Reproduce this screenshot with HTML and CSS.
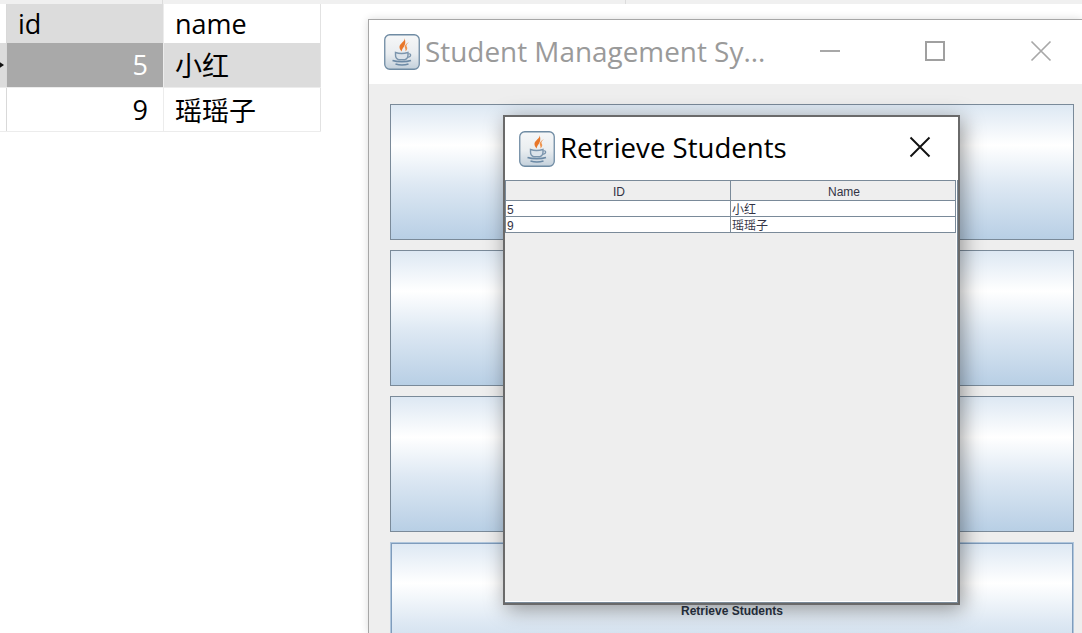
FILE: index.html
```html
<!DOCTYPE html>
<html lang="zh">
<head>
<meta charset="utf-8">
<title>Student Management System</title>
<link rel="stylesheet" href="styles.css">
</head>
<body>
<svg class="defs" width="0" height="0" aria-hidden="true">
  <defs>
    <linearGradient id="tile" x1="0" y1="0" x2="0" y2="1">
      <stop offset="0" stop-color="#f6f7f8"/>
      <stop offset="0.55" stop-color="#e9edf0"/>
      <stop offset="1" stop-color="#c3d0db"/>
    </linearGradient>
    <symbol id="java" viewBox="0 0 36 36">
      <rect x="0.75" y="0.75" width="34.5" height="34.5" rx="5" fill="url(#tile)" stroke="#6f8ba3" stroke-width="1.3"/>
      <path d="M20.500 4c1 3.500-5.500 5.500-5 9.500.2 1.700 1.300 3 2.300 4-.5-3.500 5.700-5.500 2.700-13.500z" fill="#e8772a"/>
      <path d="M25 8c-3.500 1.800-5 4-4 6.300.6 1.200.7 2.200.2 3.200 2.600-1.600 2.300-3.800 1.400-5-.7-1.300.6-3 2.400-4.500z" fill="#ef9550"/>
      <path d="M11.500 18.500c3 1 9 1 12.500 0v2.500c0 2.500-1.800 4.300-3.500 4.800h-5.500c-2-.6-3.500-2.300-3.500-4.800z" fill="#dbe3ea" stroke="#7b95ad" stroke-width="1.400"/>
      <path d="M24.300 20c2.800-1 3.800 2.300-.8 3.500" fill="none" stroke="#7b95ad" stroke-width="1.200"/>
      <path d="M8.500 26.500c4.500 1.600 14 1.600 18.500 0" fill="none" stroke="#6b89a5" stroke-width="1.500"/>
      <path d="M11.500 30c3.500 1 9.500 1 13 0" fill="none" stroke="#6b89a5" stroke-width="1.500"/>
    </symbol>
  </defs>
</svg>

<div class="topstrip"><span class="tick tick-a"></span><span class="tick tick-b"></span></div>

<table class="grid">
  <tr class="grid-head">
    <td class="marker"></td>
    <td class="idcol selected-head">id</td>
    <td class="namecol">name</td>
  </tr>
  <tr class="grid-row current">
    <td class="marker marker-on"><svg class="caret" width="6" height="8" viewBox="0 0 6 8"><path d="M0 0.500l5 3.500-5 3.500z" fill="#111"/></svg></td>
    <td class="idcol num cell-dark">5</td>
    <td class="namecol">小红</td>
  </tr>
  <tr class="grid-row">
    <td class="marker"></td>
    <td class="idcol num">9</td>
    <td class="namecol">瑶瑶子</td>
  </tr>
</table>

<section class="window main-window">
  <header class="titlebar main-title">
    <svg class="java"><use href="#java"/></svg>
    <span class="title-text faded">Student Management Sy...</span>
    <div class="controls">
      <svg class="ctl" width="22" height="22" viewBox="0 0 22 22"><path d="M2 11h20" stroke="#a8a8a8" stroke-width="2"/></svg>
      <svg class="ctl" width="22" height="22" viewBox="0 0 22 22"><rect x="2" y="2" width="18" height="18" fill="none" stroke="#a0a0a0" stroke-width="2"/></svg>
      <svg class="ctl" width="22" height="22" viewBox="0 0 22 22"><path d="M1.500 1.500l19 19M20.500 1.500l-19 19" stroke="#a8a8a8" stroke-width="1.700"/></svg>
    </div>
  </header>
  <div class="main-body">
    <button class="metal" tabindex="-1"></button>
    <button class="metal" tabindex="-1"></button>
    <button class="metal" tabindex="-1"></button>
    <button class="metal focused" tabindex="-1">Retrieve Students</button>
  </div>
</section>

<section class="window dialog">
  <header class="titlebar dialog-title">
    <svg class="java"><use href="#java"/></svg>
    <span class="title-text dialog-text">Retrieve Students</span>
    <svg class="dialog-close" width="22" height="22" viewBox="0 0 22 22"><path d="M1.500 1.500l19 19M20.500 1.500l-19 19" stroke="#111" stroke-width="1.900"/></svg>
  </header>
  <div class="dialog-body">
    <div class="jtable">
      <div class="jcell jhead">ID</div><div class="jcell jhead">Name</div>
      <div class="jcell">5</div><div class="jcell">小红</div>
      <div class="jcell">9</div><div class="jcell">瑶瑶子</div>
    </div>
  </div>
</section>
</body>
</html>
```
FILE: styles.css
```css
html, body {
  margin: 0;
  padding: 0;
  width: 1082px;
  height: 633px;
  overflow: hidden;
  background: #fff;
  font-family: "Liberation Sans", "Noto Sans CJK SC", sans-serif;
}
.defs { position: absolute; }

.topstrip {
  height: 4px;
  background: #f0f0f0;
  position: relative;
}
.tick { position: absolute; top: 0; width: 1px; height: 4px; background: #dcdcdc; }
.tick-a { left: 162px; }
.tick-b { left: 625px; }

.grid {
  border-collapse: collapse;
  table-layout: fixed;
  width: 321px;
  font-family: "Open Sans", "Noto Sans CJK SC", sans-serif;
  font-size: 27px;
  color: #000;
}
.grid td { padding: 0; white-space: nowrap; overflow: hidden; }
.grid-head td { height: 39px; }
.grid-row td { height: 43.5px; border-bottom: 1px solid #ececec; }
.marker { width: 6px; border-right: 1px solid #d9d9d9; }
.marker-on { background: #dcdcdc; }
.caret { display: block; margin-left: -1px; }
.idcol { width: 156px; padding: 0 !important; text-indent: 11px; border-right: 1px solid #ececec; }
.namecol { width: 156px; text-indent: 11px; border-right: 1px solid #e2e2e2; }
.selected-head { background: #dcdcdc; }
.num { text-align: right; text-indent: 0; padding-right: 15px !important; }
.cell-dark { background: #a9a9a9; color: #fff; }
.current .namecol { background: #dcdcdc; }

.window { position: absolute; box-sizing: border-box; }
.titlebar { display: flex; align-items: center; background: #fff; box-sizing: border-box; }
.java { width: 36px; height: 36px; flex: none; }
.title-text {
  font-family: "Open Sans", sans-serif;
  font-size: 27.9px;
  line-height: 34px;
  padding-bottom: 2px;
  white-space: nowrap;
}
.faded { color: #9a9a9a; }
.dialog-text { font-size: 27.6px; line-height: 32px; padding-bottom: 4px; }

.main-window {
  left: 368px;
  top: 19px;
  width: 714px;
  height: 614px;
  overflow: hidden;
  border: 1px solid #a6a6a6;
  border-right: none;
  border-bottom: none;
  background: #eee;
  box-shadow: 0 0 8px rgba(0, 0, 0, 0.14);
}
.main-title { height: 64px; padding-left: 15px; gap: 5px; position: relative; }
.controls { position: absolute; left: 449px; top: 20px; display: flex; gap: 84px; }
.ctl { flex: none; }

.main-body {
  display: flex;
  flex-direction: column;
  gap: 10px;
  padding: 20px 0 0 21px;
}
.metal {
  display: block;
  flex: none;
  width: 684px;
  height: 136px;
  box-sizing: border-box;
  padding: 0;
  border: 1px solid #7a8a99;
  background: linear-gradient(to bottom, #dde8f3 0%, #fff 30%, #dde8f3 60%, #b8cfe5 100%);
  font: bold 12px "Liberation Sans", sans-serif;
  color: #2a3444;
}
.focused {
  padding-top: 2px;
  border: 1px solid #b0c6dc;
  box-shadow: inset 0 0 0 1px #7f9cbc;
}

.dialog {
  left: 503px;
  top: 115px;
  width: 457px;
  height: 490px;
  border: 2px solid #6a6a6a;
  background: #fff;
  box-shadow: 3px 4px 20px rgba(0, 0, 0, 0.4);
}
.dialog-title { height: 63px; padding-left: 14px; gap: 5px; position: relative; }
.dialog-close { position: absolute; left: 404px; top: 19px; }

.dialog-body {
  height: 423px;
  box-sizing: border-box;
  background: #eee;
  border-right: 1px solid #7a8a99;
  border-bottom: 1px solid #7a8a99;
  box-shadow: inset 0 -1px 0 #fff, inset -1px 0 0 #fff;
}
.jtable {
  display: grid;
  grid-template-columns: 225px 225px;
  grid-template-rows: 20px 16px 16px;
  border-top: 1px solid #7a8a99;
  border-left: 1px solid #7a8a99;
  width: 451px;
  box-sizing: border-box;
  font-size: 12px;
  color: #333344;
}
.jcell {
  background: #fff;
  border-right: 1px solid #7a8a99;
  border-bottom: 1px solid #7a8a99;
  line-height: 19px;
  height: 15px;
  padding-left: 1px;
  white-space: nowrap;
  overflow: hidden;
}
.jhead {
  background: #eee;
  text-align: center;
  line-height: 22px;
  height: 19px;
  padding-left: 2px;
}
```
